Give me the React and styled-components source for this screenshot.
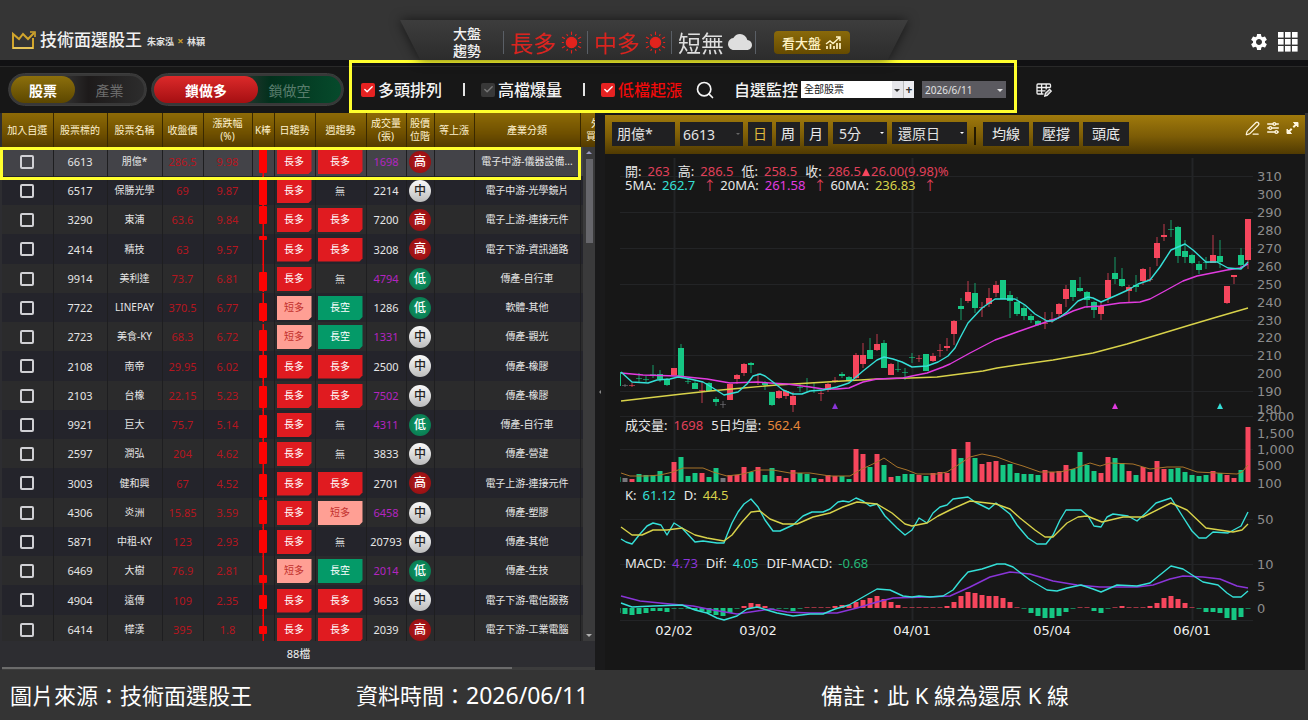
import React from 'react'
import styled, { createGlobalStyle, css } from 'styled-components'
import { MdSettings, MdCloud } from 'react-icons/md'
import { TbAdjustmentsHorizontal } from 'react-icons/tb'
import { Search, PenLine, Check } from 'lucide-react'

const RED = '#f6465d'
const GREEN = '#16c784'
const GREY = '#77777c'
const CYAN = '#35e0d8'
const MAGENTA = '#e23be0'
const YELLOW = '#d8d24a'
const PURPLE = '#8a35d8'

const columns = [
    { label: ['加入自選'], width: 51 },
    { label: ['股票標的'], width: 54 },
    { label: ['股票名稱'], width: 55 },
    { label: ['收盤價'], width: 41 },
    { label: ['漲跌幅', '(%)'], width: 49 },
    { label: ['K棒'], width: 22 },
    { label: ['日趨勢'], width: 41 },
    { label: ['週趨勢'], width: 51 },
    { label: ['成交量', '(張)'], width: 40 },
    { label: ['股價', '位階'], width: 28 },
    { label: ['等上漲'], width: 40 },
    { label: ['產業分類'], width: 106 },
    { label: ['外資', '買賣超'], width: 42 },
]

// id, name, price, change, day, week, volume, hot volume, level, industry, k bar [wick top, body top, body bottom, wick bottom]
const stocks = [
    ['6613', '朋億*', '286.5', '9.98', '長多', '長多', '1698', true, '高', '電子中游-儀器設備...', [0, 1, 26, 29]],
    ['6517', '保勝光學', '69', '9.87', '長多', '無', '2214', false, '中', '電子中游-光學鏡片', [0, 1, 29, 29]],
    ['3290', '東浦', '63.6', '9.84', '長多', '長多', '7200', false, '高', '電子上游-連接元件', [0, 1, 19, 29]],
    ['2414', '精技', '63', '9.57', '長多', '長多', '3208', false, '高', '電子下游-資訊通路', [0, 1, 5, 29]],
    ['9914', '美利達', '73.7', '6.81', '長多', '無', '4794', true, '低', '傳產-自行車', [0, 8, 27, 27]],
    ['7722', 'LINEPAY', '370.5', '6.77', '短多', '長空', '1286', false, '低', '軟體-其他', [0, 10, 28, 28]],
    ['2723', '美食-KY', '68.3', '6.72', '短多', '長空', '1331', true, '中', '傳產-觀光', [2, 8, 29, 29]],
    ['2108', '南帝', '29.95', '6.02', '長多', '長多', '2500', false, '中', '傳產-橡膠', [0, 3, 26, 29]],
    ['2103', '台橡', '22.15', '5.23', '長多', '長多', '7502', true, '中', '傳產-橡膠', [0, 5, 27, 29]],
    ['9921', '巨大', '75.7', '5.14', '長多', '無', '4311', true, '低', '傳產-自行車', [0, 5, 28, 29]],
    ['2597', '潤弘', '204', '4.62', '長多', '無', '3833', false, '中', '傳產-營建', [0, 3, 25, 29]],
    ['3003', '健和興', '67', '4.52', '長多', '長多', '2701', false, '高', '電子上游-連接元件', [0, 5, 28, 29]],
    ['4306', '炎洲', '15.85', '3.59', '長多', '短多', '6458', true, '中', '傳產-塑膠', [0, 2, 26, 29]],
    ['5871', '中租-KY', '123', '2.93', '長多', '無', '20793', false, '中', '傳產-其他', [0, 3, 26, 29]],
    ['6469', '大樹', '76.9', '2.81', '短多', '長空', '2014', true, '低', '傳產-生技', [0, 19, 27, 29]],
    ['4904', '遠傳', '109', '2.35', '長多', '長多', '9653', false, '中', '電子下游-電信服務', [0, 9, 23, 29]],
    ['6414', '樺漢', '395', '1.8', '長多', '長多', '2039', false, '高', '電子下游-工業電腦', [0, 11, 19, 29]],
]

// direction, wick top, body top, body bottom, wick bottom
const candles = [
    ['g', 218, 218, 232, 232], ['n', 230, 231, 232, 233], ['r', 229, 231, 232, 233], ['g', 219, 224, 225, 228], ['g', 222, 225, 226, 228],
    ['g', 211, 220, 221, 224], ['g', 216, 220, 225, 228], ['g', 224, 225, 231, 232], ['r', 214, 214, 221, 221], ['g', 190, 194, 223, 224],
    ['g', 224, 227, 228, 230], ['g', 227, 229, 235, 235], ['r', 228, 236, 237, 249], ['g', 228, 229, 237, 238], ['g', 243, 245, 248, 252],
    ['n', 247, 250, 251, 254], ['r', 230, 230, 246, 246], ['r', 220, 221, 225, 230], ['r', 209, 210, 219, 222], ['g', 208, 209, 211, 219],
    ['r', 219, 228, 229, 231], ['g', 227, 229, 231, 236], ['g', 238, 238, 251, 252], ['r', 236, 237, 244, 245], ['r', 236, 237, 242, 245],
    ['r', 238, 242, 251, 258], ['g', 229, 233, 234, 238], ['g', 224, 232, 233, 238], ['g', 228, 236, 237, 239], ['r', 237, 239, 240, 247],
    ['r', 229, 230, 236, 238], ['r', 223, 226, 227, 229], ['g', 218, 220, 222, 224], ['g', 222, 223, 227, 228], ['r', 199, 201, 224, 226],
    ['r', 189, 201, 210, 214], ['g', 184, 196, 205, 205], ['r', 180, 190, 196, 197], ['g', 186, 189, 214, 214], ['r', 209, 210, 221, 221],
    ['g', 206, 215, 216, 218], ['g', 214, 218, 219, 226], ['g', 199, 203, 204, 209], ['r', 201, 204, 205, 208], ['g', 200, 200, 217, 217],
    ['r', 199, 202, 207, 208], ['r', 190, 196, 197, 203], ['r', 184, 192, 194, 197], ['r', 166, 167, 180, 191], ['g', 144, 152, 155, 166],
    ['r', 127, 138, 147, 149], ['g', 129, 139, 154, 159], ['r', 148, 153, 154, 163], ['r', 134, 144, 150, 153], ['r', 127, 131, 139, 143],
    ['g', 126, 126, 145, 145], ['g', 137, 141, 147, 164], ['g', 143, 148, 160, 162], ['g', 151, 154, 162, 166], ['g', 160, 162, 166, 169],
    ['g', 166, 167, 171, 172], ['r', 158, 169, 170, 175], ['r', 158, 165, 166, 169], ['r', 149, 150, 160, 164], ['r', 131, 135, 145, 153],
    ['g', 126, 126, 143, 147], ['g', 123, 134, 137, 138], ['g', 137, 138, 146, 154], ['g', 147, 148, 156, 164], ['r', 148, 152, 160, 166],
    ['r', 119, 126, 144, 149], ['g', 103, 119, 125, 130], ['g', 114, 125, 132, 133], ['r', 131, 133, 137, 148], ['g', 121, 131, 133, 138],
    ['r', 114, 115, 127, 131], ['r', 113, 125, 126, 128], ['r', 83, 89, 104, 112], ['r', 70, 81, 83, 87], ['g', 66, 75, 76, 83],
    ['g', 72, 73, 102, 109], ['g', 86, 97, 103, 109], ['g', 100, 101, 109, 110], ['g', 107, 110, 116, 120], ['g', 103, 108, 109, 115],
    ['r', 81, 101, 109, 109], ['g', 86, 102, 108, 114], ['r', 132, 132, 149, 150], ['r', 121, 121, 123, 130], ['g', 94, 101, 111, 115],
    ['r', 65, 65, 106, 115],
]

const volumes = [
    5, 4, 3, 8, 7, 7, 11, 6, 20, 25, 6, 9, 9, 5, 14, 4, 7, 7, 15, 10, 15, 7, 14, 6, 4, 12, 9, 8, 4, 3,
    7, 6, 6, 3, 33, 28, 15, 28, 17, 5, 6, 8, 8, 7, 6, 9, 10, 9, 33, 24, 40, 24, 18, 20, 21, 17, 18, 9, 8, 8,
    7, 12, 10, 11, 17, 13, 30, 17, 11, 9, 25, 24, 19, 11, 7, 15, 10, 21, 13, 13, 14, 10, 7, 6, 7, 11, 9, 7, 4, 12, 55,
]

const histogram = [
    -5, -6, -7, -6, -5, -3, -3, -4, -1, -1, -1, -2, -3, -5, -7, -8, -5, -1, 2, 5, 4, 2, -1, -1, -1, -3, -1, 1, 1, 1,
    1, 2, 3, 3, 6, 8, 10, 12, 9, 6, 3, 1, 1, 1, 1, 1, 1, 2, 6, 12, 16, 15, 13, 12, 12, 10, 6, 1, -1, -5,
    -8, -10, -10, -8, -4, -1, 1, 1, -3, -5, -1, 1, 2, 1, 1, 1, 2, 5, 10, 12, 9, 5, 1, -1, -4, -4, -5, -10, -12, -9, -1,
]

const lines = [
    { color: YELLOW, points: '16,247 42,244 77,240 105,237 138,234 172,231 205,229 238,227 272,225 305,224 332,223 355,220 378,217 392,214 412,211 448,206 488,199 522,190 552,181 585,171 612,163 643,154' },
    { color: MAGENTA, points: '16,219 38,221 72,222 102,225 125,229 152,228 165,229 182,230 205,233 218,235 232,235 244,234 258,228 272,225 298,224 307,222 322,219 338,213 345,210 365,199 390,186 412,178 432,171 453,164 468,157 480,153 495,152 515,149 535,148 545,145 558,138 578,127 592,122 602,120 622,116 635,114 643,110' },
    { color: CYAN, points: '16,218 27,228 43,229 52,226 65,225 73,223 85,225 98,228 108,234 119,241 133,238 142,230 148,222 155,220 160,222 168,228 178,236 188,240 197,240 205,237 218,236 232,233 244,229 258,217 272,206 279,203 288,205 297,208 307,213 322,212 333,208 343,202 350,194 355,184 363,169 377,154 390,145 410,145 420,151 430,160 442,167 448,167 455,163 462,158 473,147 483,143 488,144 496,148 512,141 523,136 533,130 545,126 555,113 566,96 580,90 588,96 601,108 612,108 623,114 636,115 643,108' },
    { color: '#a8742a', thin: true, points: '16,319 25,322 42,322 55,321 68,318 78,314 98,314 108,318 122,322 138,320 152,316 168,316 185,319 205,319 225,322 245,322 255,316 272,308 279,304 292,313 302,316 312,320 332,320 342,318 353,311 365,303 377,300 392,303 408,309 418,312 435,318 455,318 468,315 485,309 495,312 505,309 528,310 545,315 562,313 578,313 592,318 612,319 632,320 637,318 643,311' },
    { color: CYAN, points: '16,385 21,388 27,390 35,380 42,372 48,369 56,371 62,381 69,369 77,374 90,388 98,387 112,389 119,389 122,381 127,369 133,358 139,350 146,345 153,353 160,366 168,377 175,377 188,371 198,362 207,358 218,358 225,355 233,348 238,347 244,348 251,344 258,347 265,352 272,350 280,362 292,374 300,381 307,376 314,364 322,369 328,359 335,353 342,351 348,345 363,343 370,348 384,355 391,349 405,360 412,371 423,384 432,390 441,390 448,381 455,366 461,356 476,356 483,362 489,372 496,373 502,363 508,360 523,362 532,367 542,358 551,349 566,344 578,363 587,377 594,384 601,384 608,378 623,379 636,372 643,358' },
    { color: YELLOW, points: '16,373 27,381 37,381 48,376 62,376 77,374 90,381 102,384 119,387 127,381 137,368 146,358 155,357 165,365 178,370 192,370 208,363 225,359 238,353 252,348 272,350 287,359 300,370 307,372 322,369 333,362 345,356 365,347 391,350 405,355 415,364 430,376 440,383 448,383 462,369 473,363 482,362 497,368 518,363 538,363 566,349 582,356 601,374 628,378 637,376 643,370' },
    { color: PURPLE, points: '16,442 35,447 65,450 88,452 108,456 132,460 152,457 165,455 182,458 205,459 232,459 252,454 272,448 288,444 322,443 345,442 365,433 385,423 405,418 425,420 448,427 472,431 495,433 532,433 548,431 565,425 578,422 598,423 615,425 632,432 643,434' },
    { color: CYAN, points: '16,449 27,453 48,452 77,451 90,456 102,459 112,464 119,466 132,462 142,455 152,453 162,456 172,459 188,462 205,460 218,460 230,455 244,451 258,443 272,435 285,436 298,442 307,443 314,442 325,443 338,442 348,436 355,427 363,418 377,415 392,410 400,410 408,413 425,426 442,436 452,437 462,434 476,431 488,435 496,438 512,431 532,432 545,429 566,412 578,415 598,428 613,431 622,439 628,443 636,443 643,437' },
]

const axis = [
    ['310', 22], ['300', 40], ['290', 58], ['280', 76], ['270', 94], ['260', 112], ['250', 130], ['240', 148], ['230', 166], ['220', 183],
    ['210', 201], ['200', 219], ['190', 237], ['180', 255], ['2,000', 262], ['1,500', 279], ['1,000', 295], ['500', 311], ['100', 329],
    ['50', 365], ['10', 410], ['5', 432], ['0', 454],
]

const dates = [['02/02', 69], ['03/02', 153], ['04/01', 307], ['05/04', 447], ['06/01', 587]]

const tone = { r: RED, g: GREEN, n: GREY }
const xOf = (i) => 13 + i * 7

function CrownIcon() {
    return (
        <svg width="26" height="20" viewBox="0 0 26 20" fill="none" stroke="#d1a52c" strokeWidth="2">
            <path d="M22 8v10H2V4l6 5 4-5 5 5 6-6" />
            <path d="M19 2h5v5" strokeWidth="1.6" />
            <path d="M2 18h20" stroke="#e6c458" />
        </svg>
    )
}

function SunIcon() {
    const rays = Array.from({ length: 12 }, (_, i) => i * 30)
    return (
        <svg width="23" height="23" viewBox="0 0 24 24" fill="#e3231d" stroke="#e3231d" strokeWidth="1.2" strokeLinecap="round">
            <circle cx="12" cy="12" r="5.4" />
            {rays.map((r) => <path key={r} d={r % 60 ? 'M12 3.600V2.400' : 'M12 3.600V1'} transform={`rotate(${r} 12 12)`} />)}
        </svg>
    )
}

function TrendIcon() {
    return (
        <svg width="17" height="13" viewBox="0 0 17 13" fill="none" stroke="#fff3c4" strokeWidth="1.4">
            <path d="M1 8l4-3 3 2.500 6.500-6M11 1h4v4" />
            <path d="M2 10v3M5.500 8v5M9 10v3M12 7v6M15 7v6" strokeWidth="1.700" />
        </svg>
    )
}

function AppsIcon() {
    const cells = [0, 7, 14]
    return (
        <svg width="20" height="20" viewBox="0 0 20 20" fill="#fff">
            {cells.map((y) => cells.map((x) => <rect key={`${x}-${y}`} x={x} y={y} width="5.600" height="5.600" />))}
        </svg>
    )
}

function TableEditIcon() {
    return (
        <svg width="16" height="14" viewBox="0 0 16 14" fill="none" stroke="#f0f0f0" strokeWidth="1.300">
            <path d="M7.500 11H2Q1 11 1 10V2Q1 1 2 1h11.500q1 0 1 1v2.500M1 4.500h13.500M1 7.800h8.500M5.600 1v10M10.200 1v5.500" />
            <path d="M8.800 13l.6-2.600 4.200-4 1.700 1.700-4.200 4.300z" fill="#f0f0f0" fillOpacity=".5" />
        </svg>
    )
}

function ExpandIcon() {
    return (
        <svg width="13" height="14" viewBox="0 0 13 14" fill="#fff6df" stroke="#fff6df">
            <path d="M7.500 1.500H12V6zM1 8v4.500h4.500z" strokeWidth="1" />
            <path d="M10.500 3L7.300 6.200M5.700 7.800L2.500 11" strokeWidth="2" />
        </svg>
    )
}

function KBar({ bar }) {
    const [high, top, bottom, low] = bar
    return (
        <KBarSvg width="8" height="29" viewBox="0 0 8 29" fill="#fd0303">
            <rect x="3.500" y={high} width="1.500" height={low + 1 - high} />
            <rect x="0" y={top} width="8" height={bottom - top} rx="1" />
        </KBarSvg>
    )
}

function TickBox({ label, color, checked, muted }) {
    return (
        <TickLabel $color={color}>
            <Tick $muted={muted}>
                <input type="checkbox" defaultChecked={checked} />
                <Check size={11} strokeWidth={3} />
            </Tick>
            {label}
        </TickLabel>
    )
}

function Trend({ value }) {
    if (value === '無') return <NoTrend>無</NoTrend>
    return <TrendTag $kind={value}>{value}</TrendTag>
}

function StockTable() {
    return (
        <ListPanel>
            <TableView>
                <Table>
                    <colgroup>
                        {columns.map((c) => <Col key={c.label[0]} $width={c.width} />)}
                    </colgroup>
                    <thead>
                        <tr>
                            {columns.map((c) => (
                                <th key={c.label[0]}>
                                    {c.label.map((line) => <div key={line}>{line}</div>)}
                                </th>
                            ))}
                        </tr>
                    </thead>
                    <tbody>
                        {stocks.map(([id, name, price, change, day, week, vol, hot, level, industry, bar], i) => (
                            <StockRow key={id} $active={i === 0}>
                                <td><RowCheck type="checkbox" aria-label={`加入自選 ${id}`} /></td>
                                <NumCell>{id}</NumCell>
                                <td>{name}</td>
                                <NumCell $color="#b5161f">{price}</NumCell>
                                <NumCell $color="#b5161f">{change}</NumCell>
                                <td><KBar bar={bar} /></td>
                                <TagCell><Trend value={day} /></TagCell>
                                <TagCell><Trend value={week} /></TagCell>
                                <NumCell $color={hot ? '#b325c0' : undefined}>{vol}</NumCell>
                                <td><Level $kind={level}>{level}</Level></td>
                                <td />
                                <td>{industry}</td>
                                <td />
                            </StockRow>
                        ))}
                    </tbody>
                </Table>
                <ScrollTrack>
                    <Arrow $up />
                    <Thumb />
                    <Arrow />
                </ScrollTrack>
            </TableView>
            <ListFooter>88檔</ListFooter>
            <HScroll><span /></HScroll>
            <RowFrame />
        </ListPanel>
    )
}

function Chart() {
    return (
        <ChartArea>
            <svg viewBox="0 0 700 516" width="100%" height="100%" preserveAspectRatio="xMinYMin meet">
                <g stroke="#232426">
                    {[22, 58, 94, 130, 166, 201, 237, 262, 295, 365, 410, 466].map((y) => <path key={y} d={`M15 ${y}.5H648`} />)}
                    {[69, 307, 587].map((x) => <path key={x} d={`M${x}.5 4V466`} strokeWidth="2" />)}
                </g>
                <clipPath id="plot"><rect x="15" y="0" width="633" height="480" /></clipPath>
                <g clipPath="url(#plot)">
                    {candles.map(([dir, high, top, bottom, low], i) => (
                        <g key={i} fill={tone[dir]}>
                            <rect x={xOf(i) - 0.5} y={high} width="1" height={low - high} opacity=".75" />
                            <rect x={xOf(i) - 3} y={top} width="6" height={bottom - top} opacity={bottom - top < 2 ? 0.6 : 1} />
                            <rect x={xOf(i) - 2.5} y={328 - volumes[i]} width="5" height={volumes[i]} />
                        </g>
                    ))}
                    {histogram.map((v, i) => (
                        <rect
                            key={i}
                            x={xOf(i) - 2.5}
                            y={v > 0 ? 454 - v : 454}
                            width="5"
                            height={Math.abs(v)}
                            fill={v > 0 ? RED : GREEN}
                            opacity={Math.abs(v) === 1 ? 0.6 : 1}
                        />
                    ))}
                    {lines.map((l) => (
                        <polyline key={l.points} points={l.points} fill="none" stroke={l.color} strokeWidth={l.thin ? 1 : 1.4} strokeLinejoin="round" />
                    ))}
                </g>
                <path d="M230 249l3 6h-6z" fill={PURPLE} />
                <path d="M510 249l3 6h-6z" fill={MAGENTA} />
                <path d="M615 249l3 6h-6z" fill={CYAN} />
                {axis.map(([label, y]) => <AxisText key={label} x="652" y={y + 5}>{label}</AxisText>)}
                {dates.map(([label, x]) => <DateText key={label} x={x} y="481">{label}</DateText>)}
            </svg>
            <Legend $top={10}>
                <dt>開:</dt><dd>263</dd>
                <dt>高:</dt><dd>286.5</dd>
                <dt>低:</dt><dd>258.5</dd>
                <dt>收:</dt><dd>286.5<UpMark />26.00(9.98)%</dd>
            </Legend>
            <Legend $top={24}>
                <dt>5MA:</dt><Value $color={CYAN}>262.7</Value><Rise>↑</Rise>
                <dt>20MA:</dt><Value $color={MAGENTA}>261.58</Value><Rise>↑</Rise>
                <dt>60MA:</dt><Value $color={YELLOW}>236.83</Value><Rise>↑</Rise>
            </Legend>
            <Legend $top={264}>
                <dt>成交量:</dt><dd>1698</dd>
                <dt>5日均量:</dt><Value $color="#e8883a">562.4</Value>
            </Legend>
            <Legend $top={334}>
                <dt>K:</dt><Value $color={CYAN}>61.12</Value>
                <dt>D:</dt><Value $color={YELLOW}>44.5</Value>
            </Legend>
            <Legend $top={402}>
                <dt>MACD:</dt><Value $color={PURPLE}>4.73</Value>
                <dt>Dif:</dt><Value $color={CYAN}>4.05</Value>
                <dt>DIF-MACD:</dt><Value $color="#25b878">-0.68</Value>
            </Legend>
        </ChartArea>
    )
}

function App() {
    return (
        <Page>
            <GlobalStyle />
            <Header>
                <Brand>
                    <CrownIcon />
                    <h1>技術面選股王</h1>
                    <p>朱家泓 <i>×</i> 林穎</p>
                </Brand>
                <MarketShadow>
                    <Market>
                        <MarketTitle>大盤<br />趨勢</MarketTitle>
                        <MarketItem $color="#d9241f">長多<SunIcon /></MarketItem>
                        <MarketItem $color="#d9241f">中多<SunIcon /></MarketItem>
                        <MarketItem $color="#dedede">短無<MdCloud size={24} /></MarketItem>
                        <MarketEnd>
                            <MarketButton type="button">看大盤<TrendIcon /></MarketButton>
                        </MarketEnd>
                    </Market>
                </MarketShadow>
                <HeaderActions>
                    <IconButton type="button" aria-label="設定"><MdSettings size={20} /></IconButton>
                    <IconButton type="button" aria-label="選單"><AppsIcon /></IconButton>
                </HeaderActions>
            </Header>

            <Toolbar>
                <Pill $width={139}>
                    <PillTab type="button" $kind="gold" $width={64}>股票</PillTab>
                    <PillTab type="button" $kind="plain">產業</PillTab>
                </Pill>
                <Pill $width={193} $green>
                    <PillTab type="button" $kind="red" $width={104}>鎖做多</PillTab>
                    <PillTab type="button" $kind="green">鎖做空</PillTab>
                </Pill>
                <FilterFrame>
                    <TickBox label="多頭排列" checked />
                    <Bar />
                    <TickBox label="高檔爆量" muted />
                    <Bar />
                    <TickBox label="低檔起漲" color="#f00a0a" checked />
                    <SearchButton type="button" aria-label="搜尋"><Search size={20} strokeWidth={2} /></SearchButton>
                    <WatchLabel htmlFor="watch">自選監控</WatchLabel>
                    <WatchSelect>
                        <select id="watch"><option>全部股票</option></select>
                        <button type="button" aria-label="新增">+</button>
                    </WatchSelect>
                    <DateSelect>
                        <select aria-label="日期"><option>2026/6/11</option></select>
                    </DateSelect>
                </FilterFrame>
                <EditButton type="button" aria-label="編輯欄位"><TableEditIcon /></EditButton>
            </Toolbar>

            <Main>
                <StockTable />
                <Splitter><span /></Splitter>
                <ChartPanel>
                    <ChartBar>
                        <NameInput aria-label="股票名稱" defaultValue="朋億*" />
                        <BarSelect $width={63} $height={24} $dim>
                            <select aria-label="股票代號"><option>6613</option></select>
                        </BarSelect>
                        <BarGroup>
                            <BarButton type="button" $width={24} $on>日</BarButton>
                            <BarButton type="button" $width={24}>周</BarButton>
                            <BarButton type="button" $width={24}>月</BarButton>
                        </BarGroup>
                        <BarSelect $width={54} $height={22}>
                            <select aria-label="分鐘"><option>5分</option></select>
                        </BarSelect>
                        <BarSelect $width={75} $height={22}>
                            <select aria-label="還原"><option>還原日</option></select>
                        </BarSelect>
                        <BarDivider />
                        <BarGroup>
                            <BarButton type="button" $width={46}>均線</BarButton>
                            <BarButton type="button" $width={46}>壓撐</BarButton>
                            <BarButton type="button" $width={46}>頭底</BarButton>
                        </BarGroup>
                        <BarIcons>
                            <IconButton type="button" aria-label="畫線"><PenLine size={15} /></IconButton>
                            <IconButton type="button" aria-label="參數"><TbAdjustmentsHorizontal size={16} /></IconButton>
                            <IconButton type="button" aria-label="放大"><ExpandIcon /></IconButton>
                        </BarIcons>
                    </ChartBar>
                    <Chart />
                </ChartPanel>
            </Main>

            <Footer>
                <p>圖片來源：技術面選股王</p>
                <p>資料時間：<time>2026/06/11</time></p>
                <p>備註：此 K 線為還原 K 線</p>
            </Footer>
        </Page>
    )
}

const GlobalStyle = createGlobalStyle`
    *{
        box-sizing: border-box;
        margin: 0;
        padding: 0;
    }
    body{
        background: #333;
        color: #f2f2f2;
        font-family: "Noto Sans", "Noto Sans CJK TC", sans-serif;
    }
    button, input, select{
        font-family: inherit;
        color: inherit;
        border: none;
        outline: none;
    }
    button{
        cursor: pointer;
        background: transparent;
    }
    select{
        appearance: none;
    }
`;

const Page = styled.div`
    display: flex;
    flex-direction: column;
    height: 100vh;
    min-height: 600px;
    min-width: 1200px;
    overflow: hidden;
`;

const Header = styled.header`
    display: grid;
    grid-template-columns: 1fr auto 1fr;
    height: 60px;
    flex: none;
    padding-top: 20px;
    background: #353535;
`;

const Brand = styled.div`
    display: flex;
    align-items: center;
    padding-left: 11px;
    h1{
        margin-left: 3px;
        font-size: 17px;
        line-height: 24px;
        font-weight: 500;
        color: #f0f0f0;
    }
    p{
        margin-left: 5px;
        font-size: 9px;
        font-weight: 700;
        white-space: pre;
        color: #e0e0e0;
    }
    i{
        margin: 0 1px;
        font-style: normal;
        font-size: 11px;
        color: #c9a030;
    }
`;

const MarketShadow = styled.div`
    filter: drop-shadow(0 0 6px rgba(0,0,0,0.6));
`;

const Market = styled.div`
    display: flex;
    align-items: center;
    width: 508px;
    height: 40px;
    padding: 4px 0 0 53px;
    background: linear-gradient(#3d3d3d, #2c2c2c);
    clip-path: polygon(0 0, 100% 0, 96% 100%, 4% 100%);
`;

const MarketTitle = styled.p`
    width: 50px;
    font-size: 14px;
    line-height: 17px;
    font-weight: 500;
`;

const MarketItem = styled.div`
    display: flex;
    align-items: center;
    gap: 4px;
    width: 84px;
    height: 23px;
    padding-left: 6px;
    border-left: 1px solid #5a5f66;
    font-size: 23px;
    white-space: nowrap;
    color: ${(p) => p.$color};
    svg{
        flex: none;
    }
`;

const MarketEnd = styled.div`
    height: 23px;
    padding-left: 18px;
    border-left: 1px solid #5a5f66;
`;

const MarketButton = styled.button`
    display: flex;
    align-items: center;
    justify-content: center;
    gap: 4px;
    width: 76px;
    height: 23px;
    border-radius: 4px;
    background: linear-gradient(#8a6a0a, #654a00);
    font-size: 13px;
    font-weight: 500;
    color: #fff3c4;
`;

const HeaderActions = styled.div`
    display: flex;
    align-items: center;
    justify-content: flex-end;
    gap: 9px;
    padding: 4px 10px 0 0;
`;

const IconButton = styled.button`
    display: flex;
    align-items: center;
    color: #fff;
`;

const EditButton = styled(IconButton)`
    margin: 6px 0 0 19px;
`;

const Toolbar = styled.div`
    display: flex;
    align-items: center;
    flex: none;
    height: 53px;
    padding-left: 8px;
    background: linear-gradient(#111113 0 6px, #292929 6px 7px, #171717 7px);
`;

const Pill = styled.div`
    display: flex;
    width: ${(p) => p.$width}px;
    height: 33px;
    margin: 6px 4px 0 0;
    padding: 2px;
    border-radius: 17px;
    border: 1px solid #3d3d3d;
    background: ${(p) => (p.$green
        ? 'linear-gradient(90deg, #3b3b3b 40%, #02301c 62%, #064b2c)'
        : 'linear-gradient(90deg, #333 40%, #1d1a1a 58%, #2d2d2d)')};
    box-shadow: inset 0 0 0 2px #383838;
`;

const tabKinds = {
    gold: css`
        background: linear-gradient(#8c6f0c, #5c4700);
        color: #fff;
        font-weight: 700;
    `,
    plain: css`
        color: #6d6d6d;
    `,
    red: css`
        background: linear-gradient(#dc2a2a, #a50f12);
        color: #fff;
        font-weight: 700;
    `,
    green: css`
        padding-right: 20px;
        color: #587c6c;
    `,
};

const PillTab = styled.button`
    flex: ${(p) => (p.$width ? 'none' : 1)};
    width: ${(p) => p.$width}px;
    border-radius: 14px;
    font-size: 14px;
    ${(p) => tabKinds[p.$kind]}
`;

const FilterFrame = styled.div`
    display: flex;
    align-items: center;
    align-self: stretch;
    width: 668px;
    margin-left: 1px;
    padding: 6px 8px 0 9px;
    border: 3px solid #ffff2e;
`;

const TickLabel = styled.label`
    display: flex;
    align-items: center;
    gap: 3px;
    font-size: 16px;
    line-height: 20px;
    font-weight: 500;
    white-space: nowrap;
    color: ${(p) => p.$color || '#f4f4f4'};
`;

const Tick = styled.span`
    display: flex;
    align-items: center;
    justify-content: center;
    position: relative;
    width: 14px;
    height: 14px;
    border-radius: 2px;
    background: ${(p) => (p.$muted ? '#383838' : '#e52222')};
    color: ${(p) => (p.$muted ? '#777' : '#fff')};
    input{
        position: absolute;
        inset: 0;
        opacity: 0;
    }
`;

const Bar = styled.span`
    width: 2px;
    height: 13px;
    margin: 0 16px 0 21px;
    background: #e4e4e4;
`;

const SearchButton = styled.button`
    display: flex;
    margin: 0 19px 0 13px;
    color: #f4f4f4;
`;

const WatchLabel = styled.label`
    font-size: 16px;
    line-height: 20px;
    font-weight: 500;
`;

const caret = css`
    &::after{
        content: "";
        position: absolute;
        top: 50%;
        margin-top: -1px;
        border: 3px solid transparent;
        border-bottom-width: 0;
        border-top-color: currentColor;
        pointer-events: none;
    }
`;

const WatchSelect = styled.div`
    display: flex;
    position: relative;
    width: 113px;
    height: 17px;
    margin-left: 3px;
    background: #fff;
    color: #333;
    ${caret}
    &::after{
        right: 14px;
    }
    select{
        flex: 1;
        min-width: 0;
        padding-left: 3px;
        background: transparent;
        border-right: 11px solid #e6e6ea;
        font-size: 10px;
        line-height: 17px;
        color: #111;
    }
    button{
        width: 11px;
        border-left: 1px solid #bbb;
        background: #ececf0;
        font-size: 12px;
        line-height: 14px;
        font-weight: 700;
    }
`;

const DateSelect = styled.div`
    display: flex;
    position: relative;
    width: 84px;
    height: 17px;
    margin-left: 8px;
    background: #5b5a60;
    color: #e2e2e2;
    ${caret}
    &::after{
        right: 3px;
    }
    select{
        flex: 1;
        padding-left: 3px;
        background: transparent;
        font-size: 10px;
        line-height: 16px;
    }
`;

const Main = styled.main`
    display: flex;
    flex: 1;
    min-height: 0;
    background: #171717;
`;

const ListPanel = styled.section`
    display: flex;
    flex-direction: column;
    flex: none;
    position: relative;
    width: 595px;
    padding-left: 2px;
    background: #2d2d31;
`;

const TableView = styled.div`
    flex: 1;
    min-height: 0;
    position: relative;
    overflow: hidden;
`;

const Table = styled.table`
    width: 620px;
    table-layout: fixed;
    border-collapse: collapse;
    text-align: center;
    font-size: 10px;
    line-height: 15px;
    white-space: nowrap;
    th{
        height: 34px;
        background: linear-gradient(#8d6a06, #6f5000 60%, #543b00);
        border-right: 1px solid #3a2900;
        font-weight: 400;
        line-height: 13px;
        color: #fff2cf;
    }
    td{
        height: 29px;
        border-right: 1px solid #1e1e20;
        color: #e6e6e6;
    }
    tr:nth-child(4n) td{
        height: 30px;
    }
`;

const Col = styled.col`
    width: ${(p) => p.$width}px;
`;

const StockRow = styled.tr`
    background: #2b2b2c;
    &:nth-child(even){
        background: #24242b;
    }
    ${(p) => p.$active && css`
        background: #434348;
    `}
`;

const NumCell = styled.td`
    && {
        font-size: 11px;
        color: ${(p) => p.$color || '#e6e6e6'};
    }
`;

const TagCell = styled.td`
    padding: 1px 3px 0 2px;
`;

const RowCheck = styled.input`
    display: block;
    appearance: none;
    width: 14px;
    height: 14px;
    margin: 0 auto;
    && {
        border: 2px solid #d0d0d4;
    }
    border-radius: 2px;
`;

const KBarSvg = styled.svg`
    display: block;
    margin: 0 auto;
    overflow: visible;
`;

const tags = {
    長多: ['#e01b20', '#fff'],
    短多: ['#ff9f94', '#c2302c'],
    長空: ['#049a68', '#fff'],
};

const TrendTag = styled.div`
    height: 24px;
    line-height: 23px;
    background: ${(p) => tags[p.$kind][0]};
    color: ${(p) => tags[p.$kind][1]};
    clip-path: polygon(0 0, 100% 0, 100% 21px, calc(100% - 3px) 100%, 0 100%);
`;

const NoTrend = styled.span`
    color: #d6d6d6;
`;

const levels = {
    高: ['radial-gradient(#b81a1c, #8c0d10)', '#fff'],
    中: ['linear-gradient(#fafafa, #bcbcbc)', '#222'],
    低: ['radial-gradient(#0f9c6a, #087048)', '#fff'],
};

const Level = styled.div`
    width: 22px;
    height: 22px;
    margin: 0 auto;
    border-radius: 50%;
    font-size: 12px;
    line-height: 22px;
    font-weight: 500;
    background: ${(p) => levels[p.$kind][0]};
    color: ${(p) => levels[p.$kind][1]};
`;

const ScrollTrack = styled.div`
    position: absolute;
    top: 34px;
    right: 0;
    bottom: 0;
    display: flex;
    flex-direction: column;
    align-items: center;
    justify-content: space-between;
    width: 12px;
    padding: 4px 0;
    background: #3a3a3b;
`;

const Arrow = styled.i`
    border: 3px solid transparent;
    ${(p) => (p.$up
        ? 'border-top-width: 0; border-bottom-color: #9a9ac0;'
        : 'border-bottom-width: 0; border-top-color: #b0b0b0;')}
`;

const Thumb = styled.i`
    width: 7px;
    height: 84px;
    margin: 5px 0 auto;
    background: #66666b;
`;

const ListFooter = styled.div`
    height: 26px;
    font-size: 11px;
    line-height: 26px;
    text-align: center;
`;

const HScroll = styled.div`
    height: 3px;
    background: #3c3c3c;
    span{
        display: block;
        width: 86%;
        height: 2px;
        background: #6b6b6b;
    }
`;

const RowFrame = styled.div`
    position: absolute;
    top: 34px;
    left: 0;
    width: 581px;
    height: 33px;
    border: 3px solid #ffff2e;
    pointer-events: none;
`;

const Splitter = styled.div`
    display: flex;
    align-items: center;
    justify-content: center;
    width: 10px;
    background: #1a1a1b;
    span{
        border: 2px solid transparent;
        border-left-width: 0;
        border-right-color: #888;
    }
`;

const ChartPanel = styled.section`
    display: flex;
    flex-direction: column;
    flex: 1;
    min-width: 0;
    padding-top: 2px;
    border-right: 3px solid #343434;
`;

const ChartBar = styled.div`
    display: flex;
    gap: 5px;
    flex: none;
    height: 39px;
    padding: 7px 6px 0 7px;
    background: linear-gradient(#a07a0c, #7c5c06 55%, #503a02);
`;

const NameInput = styled.input`
    width: 63px;
    height: 24px;
    padding: 0 5px 2px;
    background: #202022;
    font-size: 14px;
    color: #e4e4e4;
`;

const BarSelect = styled.div`
    position: relative;
    width: ${(p) => p.$width}px;
    height: ${(p) => p.$height}px;
    background: #202022;
    color: ${(p) => (p.$dim ? '#666' : '#fff')};
    ${caret}
    &::after{
        right: 3px;
        border-width: 2px;
        border-bottom-width: 0;
    }
    select{
        width: 100%;
        height: 100%;
        padding-left: ${(p) => (p.$dim ? 3 : 6)}px;
        background: transparent;
        font-size: 14px;
        color: #e4e4e4;
    }
`;

const BarButton = styled.button`
    width: ${(p) => p.$width}px;
    height: 24px;
    background: #202022;
    font-size: 14px;
    line-height: 22px;
    color: ${(p) => (p.$on ? '#e0b93c' : '#ececec')};
`;

const BarDivider = styled.span`
    width: 2px;
    height: 18px;
    margin: 5px 2px 0;
    background: #241a00;
`;

const BarGroup = styled.div`
    display: flex;
    gap: 4px;
`;

const BarIcons = styled.div`
    display: flex;
    gap: 5px;
    height: 12px;
    margin-left: auto;
    button{
        color: #fff6df;
    }
`;

const ChartArea = styled.div`
    flex: 1;
    min-height: 0;
    position: relative;
    svg{
        display: block;
    }
`;

const AxisText = styled.text`
    font: 13px "DejaVu Sans", sans-serif;
    fill: #8c8c8c;
`;

const DateText = styled.text`
    font: 13px "DejaVu Sans", sans-serif;
    fill: #f0f0f0;
    text-anchor: middle;
`;

const Legend = styled.dl`
    position: absolute;
    top: ${(p) => p.$top}px;
    left: 20px;
    display: flex;
    font-size: 13px;
    line-height: 14px;
    white-space: nowrap;
    dt{
        margin-right: 6px;
        color: #e8e8e8;
    }
    dd{
        margin-right: 8px;
        color: #e0405a;
    }
`;

const Value = styled.dd`
    && {
        color: ${(p) => p.$color};
    }
`;

const Rise = styled.dd`
    width: 9px;
    text-align: center;
`;

const UpMark = styled.i`
    display: inline-block;
    margin: 0 1px;
    border: 4px solid transparent;
    border-top-width: 0;
    border-bottom: 8px solid #f6465d;
`;

const Footer = styled.footer`
    display: grid;
    grid-template-columns: 346px 465px 1fr;
    align-items: center;
    flex: none;
    height: 50px;
    padding-left: 10px;
    background: #343434;
    font-size: 22px;
    line-height: 30px;
    color: #fff;
    white-space: nowrap;
    time{
        font-size: 23px;
    }
`;

export default App;
